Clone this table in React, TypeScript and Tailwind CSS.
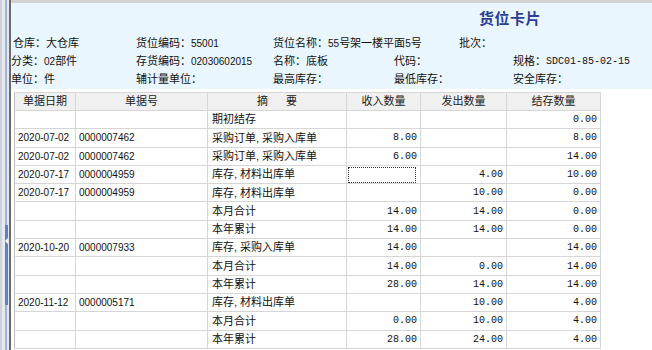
import React from "react";

type Row = {
  date?: string;
  no?: string;
  memo: string;
  inQty?: string;
  outQty?: string;
  bal: string;
  focus?: boolean;
};

const rows: Row[] = [
  { memo: "期初结存", bal: "0.00" },
  { date: "2020-07-02", no: "0000007462", memo: "采购订单, 采购入库单", inQty: "8.00", bal: "8.00" },
  { date: "2020-07-02", no: "0000007462", memo: "采购订单, 采购入库单", inQty: "6.00", bal: "14.00" },
  { date: "2020-07-17", no: "0000004959", memo: "库存, 材料出库单", outQty: "4.00", bal: "10.00", focus: true },
  { date: "2020-07-17", no: "0000004959", memo: "库存, 材料出库单", outQty: "10.00", bal: "0.00" },
  { memo: "本月合计", inQty: "14.00", outQty: "14.00", bal: "0.00" },
  { memo: "本年累计", inQty: "14.00", outQty: "14.00", bal: "0.00" },
  { date: "2020-10-20", no: "0000007933", memo: "库存, 采购入库单", inQty: "14.00", bal: "14.00" },
  { memo: "本月合计", inQty: "14.00", outQty: "0.00", bal: "14.00" },
  { memo: "本年累计", inQty: "28.00", outQty: "14.00", bal: "14.00" },
  { date: "2020-11-12", no: "0000005171", memo: "库存, 材料出库单", outQty: "10.00", bal: "4.00" },
  { memo: "本月合计", inQty: "0.00", outQty: "10.00", bal: "4.00" },
  { memo: "本年累计", inQty: "28.00", outQty: "24.00", bal: "4.00" },
];

// one label/value pair in the header panel
function Field({ label, value, w, mono }: { label: string; value?: string; w: string; mono?: boolean }) {
  return (
    <div className={`${w} flex items-center whitespace-nowrap shrink-0`}>
      <span>{label}：</span>
      {value && (
        <span className={mono ? "font-['Liberation_Mono',monospace] text-[10px]" : "text-[10px]"}>
          {value.split(/(\d[\d-]*)/).map((part, i) =>
            /^\d/.test(part) || mono ? <span key={i}>{part}</span> : <span key={i} className="text-[11px]">{part}</span>
          )}
        </span>
      )}
    </div>
  );
}

const num = "text-right pr-[3px] font-['Liberation_Mono',monospace] text-[10px]";
const cell = "border-r border-b border-[#d6d6d6] p-0 align-middle whitespace-nowrap overflow-hidden";

export default function App() {
  return (
    <div className="w-[652px] h-[350px] overflow-hidden flex bg-white text-[11px] text-[#111] font-['Liberation_Sans','Noto_Sans_CJK_SC',sans-serif]">
      {/* splitter strip on the left */}
      <div className="relative w-[11px] shrink-0 flex bg-[#e6eaef]">
        <div className="w-[2px] bg-[#cfd3d8]" />
        <div className="w-[3px]" />
        <div className="w-[2px] bg-[#9fb4de]" />
        <div className="w-[2px]" />
        <div className="w-[2px] bg-[#6a6a6a]" />
        <div className="absolute left-[5px] top-[225px] w-[3px] h-[80px] bg-[#5b80d2]" />
        <div className="absolute left-[5px] top-[238px] w-0 h-0 border-y-[3px] border-y-transparent border-r-[3px] border-r-white" />
      </div>

      <div className="flex-1 flex flex-col">
        <div className="h-[3px] bg-[#d2d2d2]" />

        {/* header panel */}
        <div className="h-[86px] bg-[#eaf6fd] flex flex-col">
          <div className="h-[31px] pl-[468px] pt-[7px]">
            <span className="text-[15px] leading-[18px] font-bold text-[#2a3f95] tracking-[0.5px]">货位卡片</span>
          </div>
          <div className="h-[18px] flex items-center pl-[2px]">
            <Field label="仓库" value="大仓库" w="w-[123px]" />
            <Field label="货位编码" value="55001" w="w-[137px]" />
            <Field label="货位名称" value="55号架一楼平面5号" w="w-[186px]" />
            <Field label="批次" w="w-[60px]" />
          </div>
          <div className="h-[18px] flex items-center">
            <Field label="分类" value="02部件" w="w-[125px]" />
            <Field label="存货编码" value="02030602015" w="w-[137px]" />
            <Field label="名称" value="底板" w="w-[121px]" />
            <Field label="代码" w="w-[119px]" />
            <Field label="规格" value="SDC01-85-02-15" w="w-[120px]" mono />
          </div>
          <div className="h-[18px] flex items-center">
            <Field label="单位" value="件" w="w-[125px]" />
            <Field label="辅计量单位" w="w-[137px]" />
            <Field label="最高库存" w="w-[121px]" />
            <Field label="最低库存" w="w-[119px]" />
            <Field label="安全库存" w="w-[120px]" />
          </div>
        </div>

        {/* ledger grid */}
        <div className="flex-1 pl-[3px] pt-[3px]">
          <table className="table-fixed border-collapse w-[586px] border-l border-[#bdbdbd]">
            <colgroup>
              <col className="w-[61px]" />
              <col className="w-[132px]" />
              <col className="w-[139px]" />
              <col className="w-[74px]" />
              <col className="w-[86px]" />
              <col className="w-[94px]" />
            </colgroup>
            <thead>
              <tr className="h-[18px] bg-[#f0f0f0] text-[#222]">
                <th className={`${cell} border-t border-[#c9c9c9] font-normal text-center`}>单据日期</th>
                <th className={`${cell} border-t border-[#c9c9c9] font-normal text-center`}>单据号</th>
                <th className={`${cell} border-t border-[#c9c9c9] font-normal text-center`}>
                  摘<span className="ml-[18px]">要</span>
                </th>
                <th className={`${cell} border-t border-[#c9c9c9] font-normal text-center`}>收入数量</th>
                <th className={`${cell} border-t border-[#c9c9c9] font-normal text-center`}>发出数量</th>
                <th className={`${cell} border-t border-[#c9c9c9] font-normal text-center`}>结存数量</th>
              </tr>
            </thead>
            <tbody>
              {rows.map((r, i) => (
                <tr key={i} className="h-[18.3px]">
                  <td className={`${cell} pl-[3px] text-[10px]`}>{r.date}</td>
                  <td className={`${cell} pl-[3px] text-[10px]`}>{r.no}</td>
                  <td className={`${cell} pl-[4px]`}>{r.memo}</td>
                  <td className={`${cell} ${num}`}>
                    {r.focus ? (
                      <div className="ml-px mr-px h-[16px] border border-dotted border-[#333]" />
                    ) : (
                      r.inQty
                    )}
                  </td>
                  <td className={`${cell} ${num}`}>{r.outQty}</td>
                  <td className={`${cell} ${num}`}>{r.bal}</td>
                </tr>
              ))}
            </tbody>
          </table>
        </div>
      </div>
    </div>
  );
}
